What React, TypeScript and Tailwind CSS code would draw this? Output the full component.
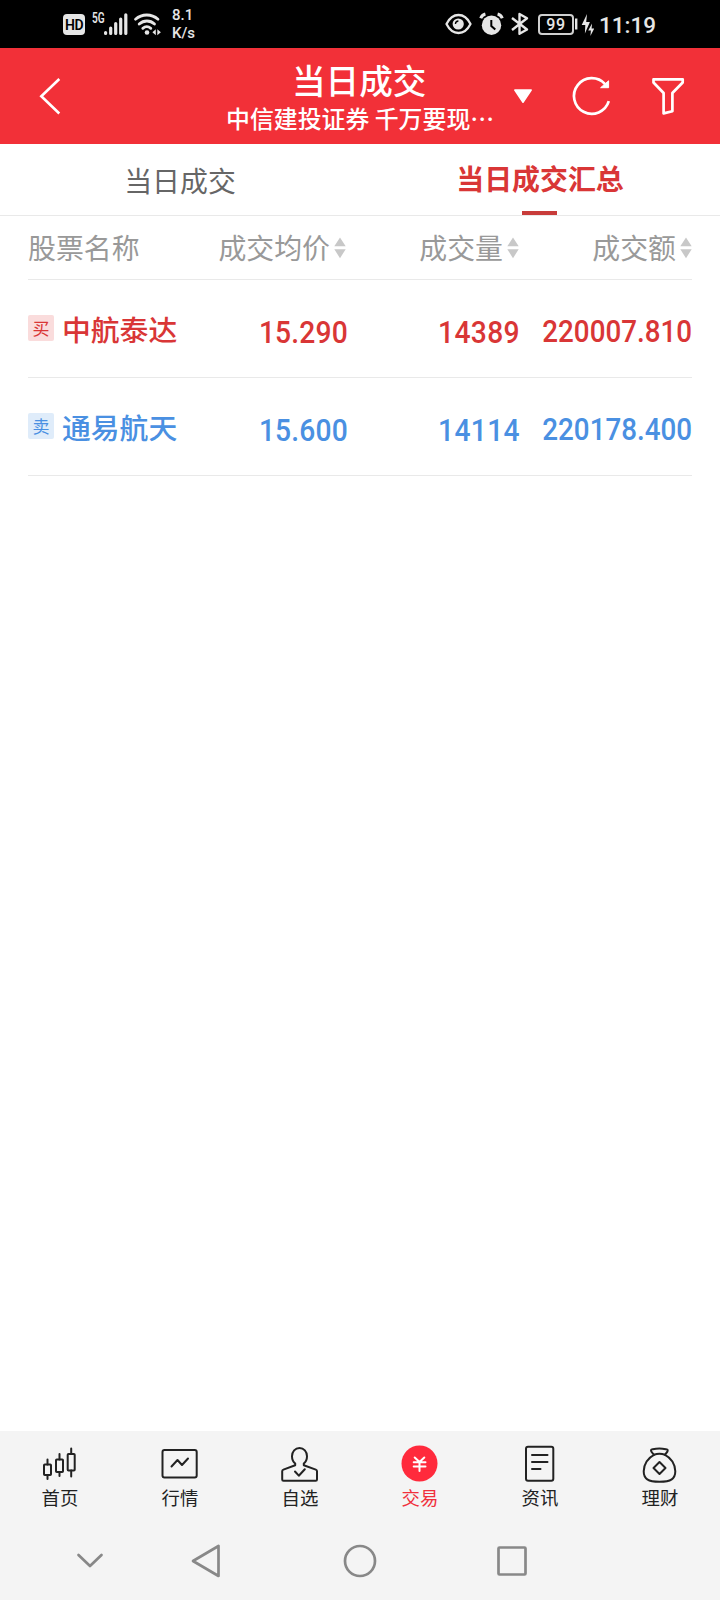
import type { ReactNode } from "react";

const CJK = "font-['Noto_Sans_CJK_SC',sans-serif]";

type Trade = { side: "buy" | "sell"; name: string; price: string; volume: string; amount: string };

const trades: Trade[] = [
  { side: "buy", name: "中航泰达", price: "15.290", volume: "14389", amount: "220007.810" },
  { side: "sell", name: "通易航天", price: "15.600", volume: "14114", amount: "220178.400" },
];

function StatusBar() {
  return (
    <div className="flex h-12 items-start bg-black font-[Roboto,sans-serif] text-[#e6e6e6]">
      <div className="mt-[14px] ml-[63px] flex h-[21px] w-[22px] items-center justify-center rounded-[4px] bg-[#e6e6e6] text-[14px] leading-none font-semibold tracking-[-0.4px] text-black">
        HD
      </div>
      <span className="mt-[12px] ml-[7px] w-[13px] origin-left scale-x-[0.72] text-[14px] leading-[13px] font-semibold">5G</span>
      {/* signal + wifi */}
      <svg className="-ml-[1px]" width="57" height="48" viewBox="104 0 57 48" fill="none" stroke="#e6e6e6" strokeLinecap="round">
        <path d="M105.6 32.6v.8M110.7 28v5.4M115.7 23.5v9.9M120.7 19v14.4M125.8 14.8v18.6" strokeWidth="3.2" />
        <path d="M135.5 19.2c6.5-5.6 16-5.6 22.5 0M139.2 24c4.5-4 11-4 15.3 0M142.8 28.3c2.4-2 5.6-2 8 0" strokeWidth="2.8" />
        <circle cx="147" cy="32.5" r="2.3" fill="#e6e6e6" stroke="none" />
        <path d="M155.8 29.2v6l-3.4-3zM157.3 29.2v6l3.6-3z" fill="#e6e6e6" stroke="none" />
      </svg>
      <div className="mt-[6px] ml-[11px] text-[15px] leading-[18px] font-medium">
        <div>8.1</div>
        <div>K/s</div>
      </div>
      <svg className="ml-auto" width="86" height="48" viewBox="444 0 86 48" fill="none" stroke="#e6e6e6">
        <path d="M446.5 24c6-12 18-12 24 0c-6 12-18 12-24 0z" strokeWidth="2.3" strokeLinejoin="round" />
        <circle cx="458.2" cy="24" r="5.6" fill="#e6e6e6" stroke="none" />
        <path d="M455.4 24a3.2 3.2 0 0 1 3-3" stroke="#000" strokeWidth="1.3" />
        <circle cx="491.5" cy="25.2" r="9.7" fill="#e6e6e6" stroke="none" />
        <path d="M491.3 20v6l4 3.6" stroke="#000" strokeWidth="2" />
        <path d="M480.7 18.2c.8-2 2.5-3.6 4.7-4.2M502.3 18.2c-.8-2-2.5-3.6-4.7-4.2" strokeWidth="3" />
        <path d="M512 18l15 11.5-7.5 4.3V14l7.5 4.3L512 30" strokeWidth="2.4" strokeLinejoin="round" />
      </svg>
      <div className="mt-[14px] ml-[8px] flex h-[21px] w-[36px] items-center justify-center rounded-[4px] border-2 border-[#cfcfcf] text-[16px] leading-none font-medium tracking-[0.6px]">
        99
      </div>
      <svg width="20" height="48" viewBox="574 0 20 48" fill="#e6e6e6">
        <rect x="575" y="18.5" width="2.4" height="11" />
        <path d="M587 14l-5.3 11h3.6l-.4 8.500 5-11.500h-3.700z" />
        <path d="M592 23.500l-3.800 7h2.700l-.5 5.500 3.900-7.500h-2.700z" />
      </svg>
      <span className="mt-[10px] mr-[64px] ml-[5px] w-[57px] text-[22.5px] leading-[30px] font-medium whitespace-nowrap">11:19</span>
    </div>
  );
}

function Header() {
  return (
    <header className="grid h-24 grid-cols-[226px_1fr_211px] bg-[#f23038] text-white">
      <svg width="226" height="96" viewBox="0 48 226 96" fill="none" stroke="currentColor" strokeWidth="2.6">
        <path d="M59.3 79L41.3 96.2L59.3 113.5" />
      </svg>
      <div className="flex flex-col items-start whitespace-nowrap">
        <h1 className="mt-[14px] ml-[66px] text-[33.6px] leading-[36px] font-medium">当日成交</h1>
        <p className="mt-[6px] text-[23.9px] leading-[28px] font-medium">中信建投证券 千万要现⋯</p>
      </div>
      <svg width="211" height="96" viewBox="509 48 211 96" fill="none" stroke="currentColor" strokeWidth="2.7" strokeLinejoin="round">
        <path d="M514.8 90h16.4l-8.2 12.3z" fill="currentColor" stroke="currentColor" strokeWidth="1.5" />
        <path d="M608.8 101.2a17.8 17.8 0 1 1-3.7-17" />
        <path d="M608.6 80.8v6.9h-8z" fill="currentColor" strokeWidth="1" />
        <path d="M653.5 79.3h29.2v3.2L672.4 93v18.2l-8.8 2.2V93L653.5 82.5z" />
      </svg>
    </header>
  );
}

function Tabs() {
  return (
    <div className="grid h-[72px] grid-cols-2 border-b border-[#e9e9e9] text-[27.9px] leading-[36px]">
      <div className="pt-[18px] text-center text-[#666]">当日成交</div>
      <div className="flex flex-col items-center pt-[16px] font-bold text-[#d93636]">
        当日成交汇总
        <span className="mt-auto -ml-[1px] h-1 w-[35px] bg-[#c83c3a]" />
      </div>
    </div>
  );
}

function SortHead({ children, className }: { children: ReactNode; className?: string }) {
  return (
    <div className={`flex items-center justify-end gap-[4px] ${className ?? ""}`}>
      <span className="mb-px">{children}</span>
      <svg width="12" height="22" viewBox="0 0 12 22" fill="#c8c8c8">
        <path d="M6 .5l5.7 8.8H.3zM6 21.2L.3 12.2h11.4z" />
      </svg>
    </div>
  );
}

function TradeRow({ trade }: { trade: Trade }) {
  const buy = trade.side === "buy";
  // DIN-like digits: Roboto squeezed a little, anchored to the right edge
  const num = "origin-right scale-x-[0.91] text-right font-[Roboto,sans-serif] leading-[36px] font-medium";
  return (
    <div className={`grid h-[98px] grid-cols-[170px_150px_172px_172px] items-center border-b border-[#e9e9e9] ${buy ? "text-[#d93636]" : "text-[#4a90e2]"}`}>
      <div className="flex items-center gap-2 whitespace-nowrap">
        <span className={`mb-px flex size-[26px] items-center justify-center rounded-[2px] pb-[2px] text-[17px] leading-none ${buy ? "bg-[#fadcdc]" : "bg-[#dfecfa]"}`}>
          {buy ? "买" : "卖"}
        </span>
        <span className="text-[28.8px] leading-[36px] font-medium">{trade.name}</span>
      </div>
      <div className={`${num} pt-[8px] text-[31px] tracking-[0.2px]`}>{trade.price}</div>
      <div className={`${num} pt-[8px] text-[31px] tracking-[0.4px]`}>{trade.volume}</div>
      <div className={`${num} pt-[6px] text-[30.5px]`}>{trade.amount}</div>
    </div>
  );
}

// 40x40 artwork for the bottom tab bar
const navItems: { label: string; active?: boolean; icon: ReactNode }[] = [
  {
    label: "首页",
    icon: (
      <>
        <rect x="4" y="20.5" width="7" height="10.5" rx=".8" />
        <rect x="16" y="15.5" width="7" height="12.5" rx=".8" />
        <rect x="27.7" y="10" width="7" height="16.5" rx=".8" />
        <path d="M7.500 15.500v5M7.500 31v4M19.500 10v5.500M19.500 28v4M31.200 4.500V10M31.200 26.500v6" />
      </>
    ),
  },
  {
    label: "行情",
    icon: (
      <>
        <rect x="2.5" y="6" width="34.2" height="27.5" rx="2" />
        <path d="M11.500 22.500l6-6.500 4.500 5 6-6.500" />
      </>
    ),
  },
  {
    label: "自选",
    icon: (
      <g transform="translate(-.5 1)">
        <path d="M15.700 20.200v-1.700c-2-1.600-3.200-3.900-3.200-7.200C12.500 6.500 15.700 3 20 3s7.500 3.500 7.500 8.300c0 3.300-1.200 5.600-3.200 7.200v1.700l12 4.400c.8.300 1.200.8 1.200 1.600v8.300c0 .8-.5 1.300-1.300 1.300H4c-.8 0-1.300-.5-1.300-1.300v-8.300c0-.8.400-1.300 1.200-1.600z" />
        <path d="M15.500 26.500l3.800 4.200 6-6.500" />
      </g>
    ),
  },
  {
    label: "交易",
    active: true,
    icon: (
      <>
        <circle cx="19.5" cy="19.5" r="18" fill="#ff2a3c" stroke="none" />
        <path d="M14.700 13.500l4.800 4.500 4.800-4.500M13.700 18.300h11.800M13.700 22.500h11.800M19.500 18v9" stroke="#fff" />
      </>
    ),
  },
  {
    label: "资讯",
    icon: (
      <>
        <rect x="6" y="2.7" width="27.3" height="34" rx="2" />
        <path d="M12 11h15.500M12 18h15.500M12 25h8.500" />
      </>
    ),
  },
  {
    label: "理财",
    icon: (
      <g transform="translate(-.5 .3)">
        <path d="M14.500 10.500c-1.300-1.800-3-2.800-3-4.200 0-1 .8-1.500 1.800-1.400 4.400-1.100 8.600-1.100 13 0 1.200-.1 2 .4 1.900 1.400-.1 1.400-1.500 2.400-2.800 4.200" />
        <path d="M14.500 10.500c3.500-1.200 7.400-1.200 11 0C31.500 13.500 35.800 20 35.800 27c0 7.500-4.300 10.500-15.800 10.500S4.200 34.500 4.200 27c0-7 4.300-13.500 10.300-16.500z" />
        <path d="M20 17.700l6 6-6 6-6-6z" />
      </g>
    ),
  },
];

function BottomNav() {
  return (
    <nav className="grid h-[86px] grid-cols-6">
      {navItems.map(({ label, active, icon }) => (
        <div key={label} className={`flex flex-col items-center pt-[13px] text-[18.4px] leading-[26px] ${active ? "text-[#f0303c]" : "text-[#222]"}`}>
          <svg width="40" height="40" viewBox="0 0 40 40" fill="none" stroke="#222" strokeWidth="2" strokeLinejoin="round" strokeLinecap="round">
            {icon}
          </svg>
          <span>{label}</span>
        </div>
      ))}
    </nav>
  );
}

function SystemNav() {
  return (
    <svg width="720" height="83" viewBox="0 1517 720 83" fill="none" stroke="#888" strokeWidth="2.7" strokeLinecap="round" strokeLinejoin="round">
      <path d="M78.500 1555l11.500 11 11.500-11" />
      <path d="M193 1561l25.500-15V1576z" />
      <circle cx="360" cy="1561" r="15" />
      <rect x="498.5" y="1547.5" width="27" height="27" rx="1" />
    </svg>
  );
}

export default function App() {
  return (
    <div className={`flex h-[1600px] w-[720px] flex-col overflow-hidden bg-white ${CJK}`}>
      <StatusBar />
      <Header />
      <Tabs />
      <main className="mx-7 flex-1">
        <div className="grid h-16 grid-cols-[170px_150px_172px_172px] border-b border-[#e9e9e9] text-[27.9px] leading-[36px] whitespace-nowrap text-[#999]">
          <div className="flex items-center pb-px">股票名称</div>
          <SortHead className="mr-[2px]">成交均价</SortHead>
          <SortHead className="mr-px">成交量</SortHead>
          <SortHead>成交额</SortHead>
        </div>
        {trades.map(t => <TradeRow key={t.name} trade={t} />)}
      </main>
      <footer className="bg-[#f4f4f4]">
        <BottomNav />
        <SystemNav />
      </footer>
    </div>
  );
}
